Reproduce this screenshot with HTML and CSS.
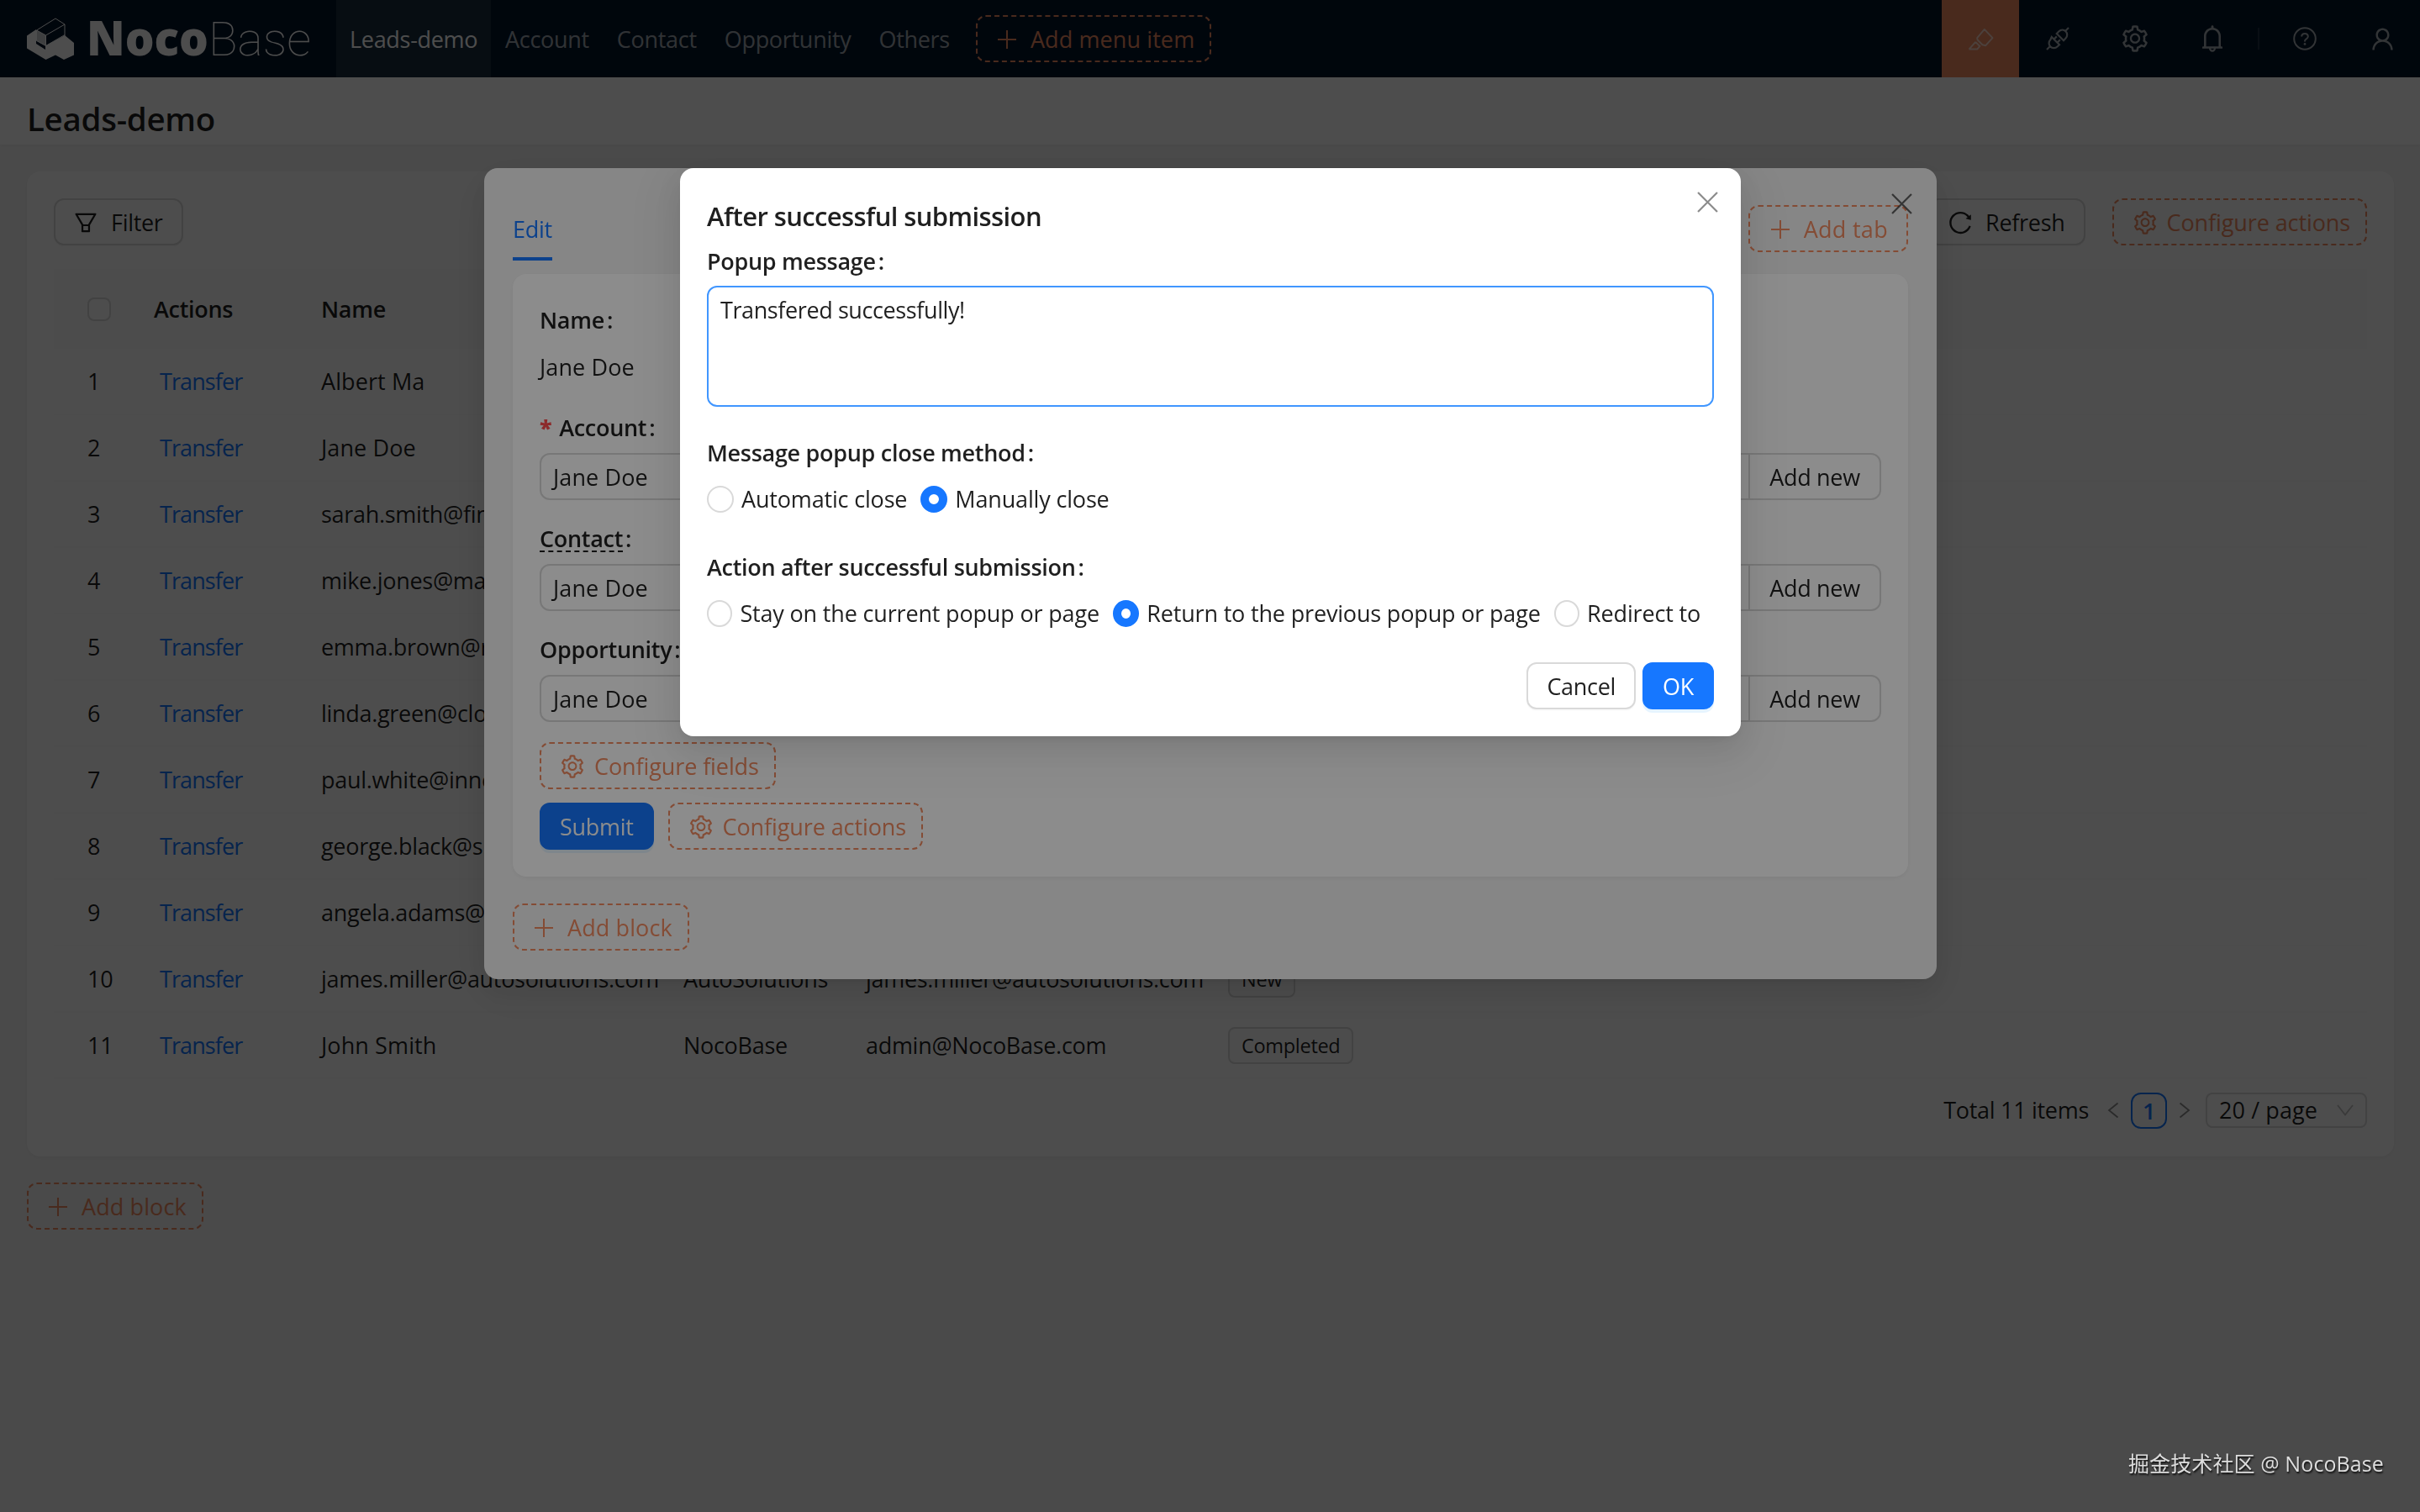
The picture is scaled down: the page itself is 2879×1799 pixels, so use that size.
FILE: index.html
```html
<!DOCTYPE html>
<html lang="en">
<head>
  <meta charset="UTF-8">
  <title>Leads-demo - NocoBase</title>
  <meta name="viewport" content="width=device-width, initial-scale=1">
  <link rel="stylesheet" href="styles.css">
</head>
<body>
  <!-- icon sprite -->
  <svg class="sprite" xmlns="http://www.w3.org/2000/svg">
    <symbol id="i-setting" viewBox="64 54 896 916"><path d="M924.8 625.7l-65.5-56c3.1-19 4.7-38.4 4.7-57.8s-1.6-38.8-4.7-57.8l65.5-56a32.03 32.03 0 009.3-35.2l-.9-2.6a443.74 443.74 0 00-79.7-137.9l-1.8-2.1a32.12 32.12 0 00-35.1-9.5l-81.3 28.9c-30-24.6-63.5-44-99.7-57.6l-15.7-85a32.05 32.05 0 00-25.8-25.7l-2.7-.5c-52.1-9.4-106.9-9.4-159 0l-2.7.5a32.05 32.05 0 00-25.8 25.7l-15.8 85.4a351.86 351.86 0 00-99 57.4l-81.9-29.1a32 32 0 00-35.1 9.5l-1.8 2.1a446.02 446.02 0 00-79.7 137.9l-.9 2.6c-4.5 12.5-.8 26.5 9.3 35.2l66.3 56.6c-3.1 18.8-4.6 38-4.6 57.1 0 19.2 1.5 38.4 4.6 57.1L99 625.5a32.03 32.03 0 00-9.3 35.2l.9 2.6c18.1 50.4 44.9 96.9 79.7 137.9l1.8 2.1a32.12 32.12 0 0035.1 9.5l81.9-29.1c29.8 24.5 63.1 43.9 99 57.4l15.8 85.4a32.05 32.05 0 0025.8 25.7l2.7.5a449.4 449.4 0 00159 0l2.7-.5a32.05 32.05 0 0025.8-25.7l15.7-85a350 350 0 0099.7-57.6l81.3 28.9a32 32 0 0035.1-9.5l1.8-2.1c34.8-41.1 61.6-87.5 79.7-137.9l.9-2.6c4.5-12.3.8-26.3-9.3-35zM788.3 465.9c2.5 15.1 3.8 30.6 3.8 46.1s-1.3 31-3.8 46.1l-6.6 40.1 74.7 63.9a370.03 370.03 0 01-42.6 73.6L721 702.8l-31.4 25.8c-23.9 19.6-50.5 35-79.3 45.8l-38.1 14.3-17.9 97a377.5 377.5 0 01-85 0l-17.9-97.2-37.8-14.5c-28.5-10.8-55-26.2-78.7-45.7l-31.4-25.9-93.4 33.2c-17-22.9-31.2-47.6-42.6-73.6l75.5-64.5-6.5-40c-2.4-14.9-3.7-30.3-3.7-45.5 0-15.3 1.2-30.6 3.7-45.5l6.5-40-75.5-64.5c11.3-26.1 25.6-50.7 42.6-73.6l93.4 33.2 31.4-25.9c23.7-19.5 50.2-34.9 78.7-45.7l37.9-14.3 17.9-97.2c28.1-3.2 56.8-3.2 85 0l17.9 97 38.1 14.3c28.7 10.8 55.4 26.2 79.3 45.8l31.4 25.8 92.8-32.9c17 22.9 31.2 47.6 42.6 73.6L781.8 426l6.5 39.9zM512 326c-97.2 0-176 78.8-176 176s78.8 176 176 176 176-78.8 176-176-78.8-176-176-176zm79.2 255.2A111.6 111.6 0 01512 614c-29.9 0-58-11.7-79.2-32.8A111.6 111.6 0 01400 502c0-29.9 11.7-58 32.8-79.2C454 401.6 482.1 390 512 390c29.9 0 58 11.6 79.2 32.8A111.6 111.6 0 01624 502c0 29.9-11.7 58-32.8 79.2z"/></symbol>
    <symbol id="i-filter" viewBox="64 64 896 896"><path d="M880.1 154H143.9c-24.5 0-39.8 26.7-27.5 48L349 597.4V838c0 17.7 14.2 32 31.8 32h262.4c17.6 0 31.8-14.3 31.8-32V597.4L907.7 202c12.2-21.3-3.1-48-27.6-48zM603.4 798H420.6V642h182.9v156zm9.6-236.6l-9.5 16.6h-183l-9.5-16.6L212.7 226h598.6L613 561.4z"/></symbol>
    <symbol id="i-reload" viewBox="64 64 896 896"><path d="M909.1 209.3l-56.4 44.1C775.8 155.1 656.2 92 521.9 92 290 92 102.3 279.5 102 511.5 101.7 743.7 289.8 932 521.9 932c181.3 0 335.8-115 394.6-276.1 1.5-4.2-.7-8.9-4.9-10.3l-56.7-19.5a8 8 0 00-10.1 4.8c-1.8 5-3.8 10-5.9 14.9-17.3 41-42.1 77.8-73.7 109.4A344.77 344.77 0 01655.9 829c-42.3 17.9-87.4 27-133.8 27-46.5 0-91.5-9.1-133.8-27A341.5 341.5 0 01279 755.2a342.16 342.16 0 01-73.7-109.4c-17.9-42.4-27-87.4-27-133.9s9.1-91.5 27-133.9c17.3-41 42.1-77.8 73.7-109.4 31.6-31.6 68.4-56.4 109.3-73.8 42.3-17.9 87.4-27 133.8-27 46.5 0 91.5 9.1 133.8 27a341.5 341.5 0 01109.3 73.8c9.9 9.9 19.2 20.4 27.8 31.4l-60.2 47a8 8 0 003 14.1l175.6 43c5 1.2 9.9-2.6 9.9-7.7l.8-180.9c-.1-6.6-7.8-10.3-13-6.2z"/></symbol>
    <symbol id="i-bell" viewBox="64 64 896 896"><path d="M816 768h-24V428c0-141.1-104.3-257.7-240-277.1V112c0-22.1-17.9-40-40-40s-40 17.9-40 40v38.9c-135.7 19.4-240 136-240 277.1v340h-24c-17.7 0-32 14.3-32 32v32c0 4.4 3.6 8 8 8h216c0 61.8 50.2 112 112 112s112-50.2 112-112h216c4.4 0 8-3.6 8-8v-32c0-17.7-14.3-32-32-32zM512 888c-26.5 0-48-21.5-48-48h96c0 26.5-21.5 48-48 48zM304 768V428c0-55.6 21.6-107.8 60.9-147.1S456.4 220 512 220c55.6 0 107.8 21.6 147.1 60.9S720 372.4 720 428v340H304z"/></symbol>
    <symbol id="i-user" viewBox="64 64 896 896"><path d="M858.5 763.6a374 374 0 00-80.6-119.5 375.63 375.63 0 00-119.5-80.6c-.4-.2-.8-.3-1.2-.5C719.5 518 760 444.7 760 362c0-137-111-248-248-248S264 225 264 362c0 82.7 40.5 156 102.8 201.1-.4.2-.8.3-1.2.5-44.8 18.9-85 46-119.5 80.6a375.63 375.63 0 00-80.6 119.5A371.7 371.7 0 00136 901.8a8 8 0 008 8.2h60c4.4 0 7.9-3.5 8-7.8 2-77.2 33-149.5 87.8-204.3 56.7-56.7 132-87.9 212.2-87.9s155.5 31.2 212.2 87.9C779 752.7 810 825 812 902.2c.1 4.4 3.6 7.8 8 7.8h60a8 8 0 008-8.2c-1-47.8-10.9-94.3-29.5-138.2zM512 534c-45.9 0-89.1-17.9-121.6-50.4S340 407.9 340 362c0-45.9 17.9-89.1 50.4-121.6S466.1 190 512 190s89.1 17.9 121.6 50.4S684 316.1 684 362c0 45.9-17.9 89.1-50.4 121.6S557.9 534 512 534z"/></symbol>
    <symbol id="i-question" viewBox="0 0 28 28"><g fill="none" stroke="currentColor" stroke-width="2"><circle cx="14" cy="14" r="12.8"/><path d="M10.2 11.6c0-2.2 1.7-3.6 3.8-3.6s3.8 1.4 3.8 3.5c0 2.7-3.8 2.9-3.8 5.2v.9"/></g><circle cx="14" cy="20.4" r="1.4"/></symbol>
    <symbol id="i-highlight" viewBox="0 0 32 28"><path d="M11.500 12.500L20.500 2l10 10.500-8.500 9.500-4-1-6-6zM9.500 17.500l5 5M1.500 26.500h10l4-4.500M1.500 26.500l8-9" fill="none" stroke="currentColor" stroke-width="2" stroke-linejoin="round"/></symbol>
    <symbol id="i-api" viewBox="0 0 28 28"><path d="M27 1l-3.500 3.500M12.800 8l2.700-2.700a5.800 5.800 0 0 1 8 0 5.800 5.800 0 0 1 0 8.200L21 16.200zM1 27l3.500-3.500M6.800 12l9.200 9.200-2.500 2.300a5.800 5.800 0 0 1-8.200 0 5.800 5.800 0 0 1 0-8.200zM9.500 14.700l3.300-3.300M13.600 18.600l3.300-3.300" fill="none" stroke="currentColor" stroke-width="2.200"/></symbol>
    <symbol id="i-plus" viewBox="0 0 24 24"><path d="M12 1v22M1 12h22" fill="none" stroke="currentColor" stroke-width="2"/></symbol>
    <symbol id="i-close" viewBox="0 0 24 24"><path d="M1 1l22 22M23 1L1 23" fill="none" stroke="currentColor" stroke-width="2.200"/></symbol>
    <symbol id="i-left" viewBox="0 0 14 20"><path d="M12.500 1.500L2 10l10.500 8.500" fill="none" stroke="currentColor" stroke-width="1.800"/></symbol>
    <symbol id="i-right" viewBox="0 0 14 20"><path d="M1.500 1.500L12 10 1.500 18.500" fill="none" stroke="currentColor" stroke-width="1.800"/></symbol>
    <symbol id="i-down" viewBox="0 0 20 14"><path d="M1 1l9 11.500L19 1" fill="none" stroke="currentColor" stroke-width="1.800"/></symbol>
  </svg>

  <header class="header">
    <svg class="logo" viewBox="0 0 400 92" width="400" height="92">
      <path d="M32 42.500l11-7.500v17l11 7V54.500l1-.5 22-12 11 9v14.500L76 71l-10-5.500L54.500 71 32 57.500z" fill="#fff"/>
      <path d="M43.500 36L66 22l11 7v15M43.500 36l11 6L77 29M54.500 42v12.500L77 41.500M43.500 36v12.500l11 6" fill="none" stroke="#fff" stroke-width="1"/>
      <path d="M43.500 36l11 6v12.500l-11-6z" fill="#fff" fill-opacity=".8"/>
      <text class="logo-bold" x="103" y="66" textLength="145" lengthAdjust="spacingAndGlyphs">Noco</text>
      <text class="logo-thin" x="248" y="66" textLength="122" lengthAdjust="spacingAndGlyphs">Base</text>
    </svg>
    <nav class="menu">
      <a class="menu-item active">Leads-demo</a>
      <a class="menu-item">Account</a>
      <a class="menu-item">Contact</a>
      <a class="menu-item">Opportunity</a>
      <a class="menu-item">Others</a>
    </nav>
    <button class="btn designer add-menu"><svg class="plus"><use href="#i-plus"/></svg>Add menu item</button>
    <div class="tools">
      <span class="tool tool-on"><svg width="31" height="27"><use href="#i-highlight"/></svg></span>
      <span class="tool"><svg width="28" height="28"><use href="#i-api"/></svg></span>
      <span class="tool"><svg width="32" height="32"><use href="#i-setting"/></svg></span>
      <span class="tool"><svg width="32" height="32"><use href="#i-bell"/></svg></span>
      <span class="tool-line"></span>
      <span class="tool"><svg width="28" height="28"><use href="#i-question"/></svg></span>
      <span class="tool"><svg width="29" height="29"><use href="#i-user"/></svg></span>
    </div>
  </header>

  <div class="page-header">Leads-demo</div>

  <main class="content">
    <section class="card">
      <div class="action-bar">
        <button class="btn"><svg class="ico"><use href="#i-filter"/></svg>Filter</button>
        <div class="action-right">
          <button class="btn"><svg class="ico"><use href="#i-reload"/></svg>Refresh</button>
          <button class="btn designer config"><svg class="ico"><use href="#i-setting"/></svg>Configure actions</button>
        </div>
      </div>

      <table class="table">
        <colgroup>
          <col class="c-no"><col class="c-act"><col class="c-name"><col class="c-company"><col class="c-email"><col>
        </colgroup>
        <thead>
          <tr><th><span class="checkbox"></span></th><th>Actions</th><th>Name</th><th></th><th></th><th></th></tr>
        </thead>
        <tbody>
          <tr><td>1</td><td><a>Transfer</a></td><td class="person">Albert Ma</td><td></td><td></td><td></td></tr>
          <tr><td>2</td><td><a>Transfer</a></td><td class="person">Jane Doe</td><td></td><td></td><td></td></tr>
          <tr><td>3</td><td><a>Transfer</a></td><td>sarah.smith@fin.com</td><td></td><td></td><td></td></tr>
          <tr><td>4</td><td><a>Transfer</a></td><td>mike.jones@mail.com</td><td></td><td></td><td></td></tr>
          <tr><td>5</td><td><a>Transfer</a></td><td>emma.brown@r.com</td><td></td><td></td><td></td></tr>
          <tr><td>6</td><td><a>Transfer</a></td><td>linda.green@clo.com</td><td></td><td></td><td></td></tr>
          <tr><td>7</td><td><a>Transfer</a></td><td>paul.white@inno.com</td><td></td><td></td><td></td></tr>
          <tr><td>8</td><td><a>Transfer</a></td><td>george.black@s.com</td><td></td><td></td><td></td></tr>
          <tr><td>9</td><td><a>Transfer</a></td><td>angela.adams@h.com</td><td></td><td></td><td></td></tr>
          <tr><td>10</td><td><a>Transfer</a></td><td>james.miller@autosolutions.com</td><td>AutoSolutions</td><td>james.miller@autosolutions.com</td><td><span class="tag">New</span></td></tr>
          <tr><td>11</td><td><a>Transfer</a></td><td class="person">John Smith</td><td>NocoBase</td><td>admin@NocoBase.com</td><td><span class="tag">Completed</span></td></tr>
        </tbody>
      </table>

      <div class="pagination">
        <span class="total">Total 11 items</span>
        <svg class="arrow"><use href="#i-left"/></svg>
        <span class="page-no">1</span>
        <svg class="arrow"><use href="#i-right"/></svg>
        <span class="page-size">20 / page<svg width="20" height="14"><use href="#i-down"/></svg></span>
      </div>
    </section>

    <button class="btn designer"><svg class="plus"><use href="#i-plus"/></svg>Add block</button>
  </main>

  <!-- transfer popup -->
  <div class="mask">
    <div class="modal popup">
      <svg class="close"><use href="#i-close"/></svg>
      <div class="tabs">
        <span class="tab">Edit</span>
        <button class="btn designer add-tab"><svg class="plus"><use href="#i-plus"/></svg>Add tab</button>
      </div>
      <div class="form-card">
        <div class="label">Name<i>:</i></div>
        <div class="readonly person">Jane Doe</div>
        <div class="label"><b class="required">*</b>Account<i>:</i></div>
        <div class="select-row"><span class="select person">Jane Doe</span><span class="add-new">Add new</span></div>
        <div class="label"><span class="dashed">Contact</span><i>:</i></div>
        <div class="select-row"><span class="select person">Jane Doe</span><span class="add-new">Add new</span></div>
        <div class="label">Opportunity<i>:</i></div>
        <div class="select-row"><span class="select person">Jane Doe</span><span class="add-new">Add new</span></div>
        <button class="btn designer config"><svg class="ico"><use href="#i-setting"/></svg>Configure fields</button>
        <div class="form-actions">
          <button class="btn primary">Submit</button>
          <button class="btn designer config"><svg class="ico"><use href="#i-setting"/></svg>Configure actions</button>
        </div>
      </div>
      <button class="btn designer"><svg class="plus"><use href="#i-plus"/></svg>Add block</button>
    </div>
  </div>

  <!-- after submission settings -->
  <div class="mask">
    <div class="modal settings">
      <svg class="close"><use href="#i-close"/></svg>
      <h2 class="modal-title">After successful submission</h2>
      <div class="label">Popup message<i>:</i></div>
      <div class="textarea">Transfered successfully!</div>
      <div class="label">Message popup close method<i>:</i></div>
      <div class="radios">
        <span class="radio"></span><span class="radio-text">Automatic close</span>
        <span class="radio checked"></span><span class="radio-text">Manually close</span>
      </div>
      <div class="label">Action after successful submission<i>:</i></div>
      <div class="radios">
        <span class="radio"></span><span class="radio-text">Stay on the current popup or page</span>
        <span class="radio checked"></span><span class="radio-text">Return to the previous popup or page</span>
        <span class="radio"></span><span class="radio-text">Redirect to</span>
      </div>
      <div class="modal-footer">
        <button class="btn">Cancel</button>
        <button class="btn primary">OK</button>
      </div>
    </div>
  </div>

  <div class="watermark">掘金技术社区 @ NocoBase</div>
</body>
</html>
```
FILE: styles.css
```css
* {
  box-sizing: border-box;
}
body {
  margin: 0;
  width: 2879px;
  height: 1799px;
  overflow: hidden;
  background: #f5f5f5;
  color: rgba(0, 0, 0, 0.88);
  font-family: "Open Sans", "Noto Sans", "Noto Sans CJK SC", sans-serif;
  font-size: 27px;
  letter-spacing: -0.3px;
  line-height: 44px;
}
svg {
  fill: currentColor;
  flex: none;
}
.sprite {
  display: none;
}
.header {
  display: flex;
  align-items: center;
  height: 92px;
  background: #001529;
}
.logo {
  display: block;
}
.logo-bold, .logo-thin {
  fill: #fff;
  font-size: 56px;
  letter-spacing: 0;
}
.logo-bold {
  font-weight: 800;
}
.logo-thin {
  font-family: Roboto, Lato, sans-serif;
  font-weight: 100;
}
.menu {
  display: flex;
  white-space: nowrap;
}
.menu-item {
  height: 92px;
  line-height: 94px;
  padding: 0 16px 0 17px;
  color: rgba(255, 255, 255, 0.65);
}
.menu-item.active {
  width: 184px;
  padding-left: 16px;
  color: #fff;
  background: rgba(255, 255, 255, 0.1);
}
.add-menu {
  margin-left: 15px;
}
.tools {
  margin-left: auto;
  margin-right: -1px;
  display: flex;
  align-items: center;
  color: rgba(255, 255, 255, 0.65);
}
.tool {
  display: flex;
  align-items: center;
  justify-content: center;
  width: 92px;
  height: 92px;
}
.tool-on {
  background: #f18b62;
}
.tool-line {
  width: 2px;
  height: 26px;
  margin: 0 8px;
  background: rgba(255, 255, 255, 0.12);
}
.page-header {
  height: 80px;
  padding-left: 32px;
  background: #fff;
  box-shadow: 0 2px 4px rgba(0, 0, 0, 0.04);
  font-size: 38.500px;
  font-weight: 600;
  line-height: 99px;
}
.content {
  padding: 32px 31px 32px 32px;
}
.btn {
  display: inline-flex;
  align-items: center;
  height: 56px;
  padding: 1px 22px 0;
  gap: 16px;
  border: 2px solid #d9d9d9;
  border-radius: 12px;
  background: #fff;
  box-shadow: 0 2px 0 rgba(0, 0, 0, 0.02);
  color: rgba(0, 0, 0, 0.88);
  font: inherit;
  letter-spacing: inherit;
  white-space: nowrap;
}
.designer {
  padding: 1px 18px 0 23px;
  border: 2px dashed #f18b62;
  background: none;
  color: #f18b62;
  box-shadow: none;
  letter-spacing: 0.1px;
}
.config {
  gap: 12px;
  letter-spacing: -0.1px;
}
.add-tab {
  padding: 1px 22px 0 24px;
  letter-spacing: 0.3px;
}
.primary {
  border-color: #1677ff;
  background: #1677ff;
  color: #fff;
  box-shadow: 0 4px 0 rgba(5, 145, 255, 0.1);
}
.ico {
  width: 28px;
  height: 28px;
}
.plus {
  width: 24px;
  height: 24px;
}
.card {
  height: 1172px;
  margin-bottom: 31px;
  padding: 32px;
  border-radius: 16px;
  background: #fff;
  box-shadow: 0 2px 4px rgba(0, 0, 0, 0.03), 0 2px 12px -2px rgba(0, 0, 0, 0.02);
}
.action-bar {
  display: flex;
  justify-content: space-between;
  margin-bottom: 28px;
}
.action-right {
  display: flex;
  gap: 32px;
}
.table {
  width: 100%;
  table-layout: fixed;
  border-collapse: collapse;
  white-space: nowrap;
}
.c-no { width: 103px; }
.c-act { width: 199px; }
.c-name { width: 431px; }
.c-company { width: 217px; }
.c-email { width: 431px; }
.table th, .table td {
  padding: 0 0 0 16px;
  height: 79px;
  text-align: left;
  font-weight: 400;
  border-bottom: 2px solid #fbfbfb;
}
.table th {
  height: 94px;
  padding-top: 3px;
  background: #fafafa;
  font-weight: 600;
}
.table th:first-child, .table td:first-child {
  padding-left: 40px;
}
.table a {
  margin-left: 7px;
  color: #1677ff;
  letter-spacing: -0.9px;
}
.person {
  letter-spacing: 0.1px;
}
.checkbox {
  display: block;
  width: 28px;
  height: 28px;
  border: 2px solid #d9d9d9;
  border-radius: 8px;
  background: #fff;
}
.tag {
  display: inline-block;
  height: 44px;
  padding: 0 14px;
  border: 2px solid #d9d9d9;
  border-radius: 8px;
  background: #fafafa;
  font-size: 23.500px;
  line-height: 41px;
}
.pagination {
  display: flex;
  justify-content: flex-end;
  align-items: center;
  margin-top: 15px;
}
.total {
  margin-right: 22px;
}
.arrow {
  width: 14px;
  height: 20px;
  color: rgba(0, 0, 0, 0.45);
}
.page-no {
  width: 43px;
  height: 43px;
  margin: 0 14px;
  border: 2px solid #1677ff;
  border-radius: 12px;
  color: #1677ff;
  font-weight: 600;
  line-height: 40px;
  text-align: center;
}
.page-size {
  display: flex;
  align-items: center;
  justify-content: space-between;
  width: 192px;
  height: 42px;
  margin-left: 18px;
  padding: 0 14px;
  border: 2px solid #d9d9d9;
  border-radius: 8px;
  letter-spacing: 0.1px;
}
.page-size svg {
  color: rgba(0, 0, 0, 0.25);
}

/* dialogs */
.mask {
  position: fixed;
  inset: 0;
  display: flex;
  justify-content: center;
  align-items: flex-start;
  padding: 200px 0 0 1px;
  background: rgba(0, 0, 0, 0.45);
}
.modal {
  position: relative;
  border-radius: 16px;
  box-shadow: 0 12px 32px rgba(0, 0, 0, 0.08), 0 6px 12px -8px rgba(0, 0, 0, 0.12), 0 18px 56px 16px rgba(0, 0, 0, 0.05);
}
.close {
  position: absolute;
  top: 28px;
  right: 27px;
  width: 25px;
  height: 25px;
  color: rgba(0, 0, 0, 0.45);
}
.popup {
  width: 1728px;
  height: 965px;
  padding: 44px 34px 0;
  background: #f5f5f5;
}
.popup .close {
  top: 30px;
  right: 29px;
  color: rgba(0, 0, 0, 0.6);
}
.tabs {
  display: flex;
  justify-content: space-between;
  height: 82px;
}
.tab {
  height: 66px;
  color: #1677ff;
  border-bottom: 4px solid #1677ff;
  line-height: 57px;
}
.form-card {
  height: 717px;
  margin-bottom: 32px;
  padding: 33px 32px 0;
  border-radius: 16px;
  background: #fff;
  box-shadow: 0 2px 4px rgba(0, 0, 0, 0.03), 0 2px 12px -2px rgba(0, 0, 0, 0.04);
}
.label {
  height: 44px;
  font-weight: 600;
}
.label i {
  margin-left: 3px;
  font-style: normal;
}
.readonly {
  height: 84px;
  line-height: 68px;
}
.required {
  margin-right: 9px;
  color: #ff4d4f;
}
.dashed {
  display: inline-block;
  height: 38px;
  border-bottom: 2px dashed rgba(0, 0, 0, 0.88);
}
.select-row {
  display: flex;
  height: 56px;
  margin: 8px 0 24px;
  line-height: 54px;
}
.select {
  flex: 1;
  padding-left: 14px;
  border: 2px solid #d9d9d9;
  border-radius: 12px 0 0 12px;
}
.add-new {
  width: 158px;
  margin-left: -2px;
  border: 2px solid #d9d9d9;
  border-radius: 0 12px 12px 0;
  text-align: center;
}
.form-actions {
  display: flex;
  gap: 17px;
  margin-top: 16px;
}
.form-card > .btn {
  display: flex;
}
.settings {
  width: 1262px;
  height: 676px;
  padding: 34px 32px 0;
  background: #fff;
}
.modal-title {
  margin: 0;
  font-size: 31px;
  font-weight: 600;
  letter-spacing: -0.6px;
  line-height: 46px;
}
.settings .label {
  padding-top: 9px;
}
.textarea {
  height: 144px;
  margin: 16px 0 0;
  padding: 5px 14px;
  border: 2px solid #4096ff;
  border-radius: 12px;
  letter-spacing: -0.4px;
}
.textarea + .label {
  margin-top: 24px;
}
.radios {
  display: flex;
  align-items: center;
  height: 92px;
  padding-bottom: 8px;
  letter-spacing: -0.17px;
}
.radio {
  width: 32px;
  height: 32px;
  margin-right: 9px;
  border: 2px solid #d9d9d9;
  border-radius: 50%;
}
.radio.checked {
  border: 10px solid #1677ff;
}
.radio-text {
  margin-right: 16px;
  white-space: nowrap;
}
.modal-footer {
  display: flex;
  justify-content: flex-end;
  gap: 8px;
  margin-top: 8px;
}
.watermark {
  position: fixed;
  right: 43px;
  bottom: 36px;
  color: #ddd;
  font-size: 25px;
  letter-spacing: 0.1px;
  text-shadow: 1px 2px 2px rgba(0, 0, 0, 0.8);
}
```
